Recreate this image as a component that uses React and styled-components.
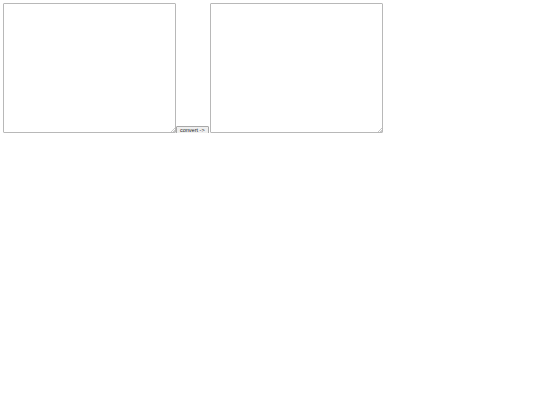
import React, { useState } from "react";
import styled, { createGlobalStyle } from "styled-components";

const GlobalStyle = createGlobalStyle`
  body {
    margin: 3px;
    background: #fff;
    font-family: "Liberation Sans", Arial, sans-serif;
  }
`;

const Row = styled.div`
  display: flex;
  align-items: flex-end;
`;

const Field = styled.div`
  position: relative;
  display: flex;

  /* small resize grip, like the browser's but at this scale */
  &::after {
    content: "";
    position: absolute;
    right: 1px;
    bottom: 1px;
    width: 4px;
    height: 4px;
    pointer-events: none;
    background: linear-gradient(
      135deg,
      transparent 0 45%,
      #c8c8c8 45% 60%,
      transparent 60% 75%,
      #c8c8c8 75% 90%,
      transparent 90%
    );
  }
`;

const Box = styled.textarea`
  box-sizing: border-box;
  width: 173px;
  height: 130px;
  margin: 0;
  padding: 1px;
  border: 1px solid #b8b8b8;
  border-radius: 1px;
  background: #fff;
  font-family: "Liberation Mono", monospace;
  font-size: 5px;
  resize: both;
  outline: none;

  &::-webkit-resizer {
    background: transparent;
  }
`;

const ConvertButton = styled.button`
  box-sizing: border-box;
  height: 9px;
  margin: 0 1px -2px 0;
  padding: 0 3px;
  border: 1px solid #a8a8a8;
  border-radius: 1px;
  background: #efefef;
  color: #222;
  font-family: "Liberation Sans", Arial, sans-serif;
  font-size: 5.5px;
  line-height: 7px;
  white-space: nowrap;
  cursor: pointer;
`;

export default function App() {
  const [input, setInput] = useState("");
  const [output, setOutput] = useState("");
  return (
    <>
      <GlobalStyle />
      <Row>
        <Field>
          <Box value={input} onChange={(e) => setInput(e.target.value)} />
        </Field>
        <ConvertButton onClick={() => setOutput(input)}>convert -&gt;</ConvertButton>
        <Field>
          <Box value={output} onChange={(e) => setOutput(e.target.value)} />
        </Field>
      </Row>
    </>
  );
}
